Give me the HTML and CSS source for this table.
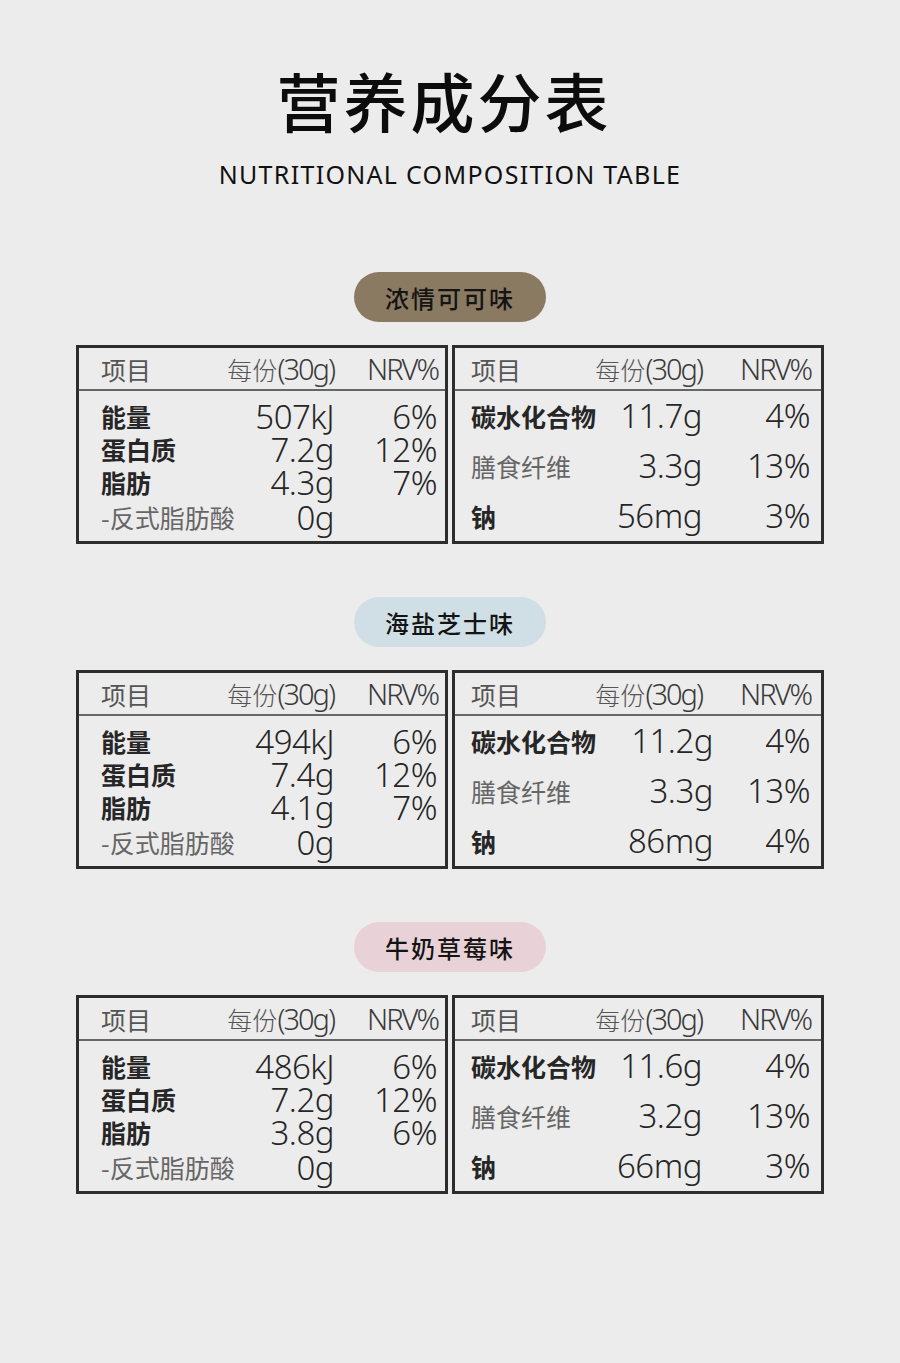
FILE: index.html
```html
<!DOCTYPE html>
<html lang="zh-CN">
<head>
<meta charset="utf-8">
<title>营养成分表</title>
<link rel="stylesheet" href="styles.css">
</head>
<body>
<main class="page">
  <header class="hero">
    <h1 class="title">营养成分表</h1>
    <p class="subtitle">NUTRITIONAL COMPOSITION TABLE</p>
  </header>

  <section class="flavor">
    <div class="pill pill-cocoa">浓情可可味</div>
    <div class="tables">
      <div class="box box-left">
        <div class="head"><span>项目</span><span class="hnum"><span class="hcjk">每份</span>(30g)</span><span class="hnum nrvh">NRV%</span></div>
        <div class="body">
          <div class="row"><span class="lab strong">能量</span><span class="num">507kJ</span><span class="num">6%</span></div>
          <div class="row"><span class="lab strong">蛋白质</span><span class="num">7.2g</span><span class="num">12%</span></div>
          <div class="row"><span class="lab strong">脂肪</span><span class="num">4.3g</span><span class="num">7%</span></div>
          <div class="row row-last"><span class="lab soft">-反式脂肪酸</span><span class="num">0g</span><span class="num"></span></div>
        </div>
      </div>
      <div class="box box-right">
        <div class="head"><span>项目</span><span class="hnum"><span class="hcjk">每份</span>(30g)</span><span class="hnum nrvh">NRV%</span></div>
        <div class="body">
          <div class="row"><span class="lab strong">碳水化合物</span><span class="num">11.7g</span><span class="num">4%</span></div>
          <div class="row"><span class="lab soft">膳食纤维</span><span class="num">3.3g</span><span class="num">13%</span></div>
          <div class="row"><span class="lab strong">钠</span><span class="num">56mg</span><span class="num">3%</span></div>
        </div>
      </div>
    </div>
  </section>

  <section class="flavor">
    <div class="pill pill-cheese">海盐芝士味</div>
    <div class="tables">
      <div class="box box-left">
        <div class="head"><span>项目</span><span class="hnum"><span class="hcjk">每份</span>(30g)</span><span class="hnum nrvh">NRV%</span></div>
        <div class="body">
          <div class="row"><span class="lab strong">能量</span><span class="num">494kJ</span><span class="num">6%</span></div>
          <div class="row"><span class="lab strong">蛋白质</span><span class="num">7.4g</span><span class="num">12%</span></div>
          <div class="row"><span class="lab strong">脂肪</span><span class="num">4.1g</span><span class="num">7%</span></div>
          <div class="row row-last"><span class="lab soft">-反式脂肪酸</span><span class="num">0g</span><span class="num"></span></div>
        </div>
      </div>
      <div class="box box-right box-shift">
        <div class="head"><span>项目</span><span class="hnum"><span class="hcjk">每份</span>(30g)</span><span class="hnum nrvh">NRV%</span></div>
        <div class="body">
          <div class="row"><span class="lab strong">碳水化合物</span><span class="num">11.2g</span><span class="num">4%</span></div>
          <div class="row"><span class="lab soft">膳食纤维</span><span class="num">3.3g</span><span class="num">13%</span></div>
          <div class="row"><span class="lab strong">钠</span><span class="num">86mg</span><span class="num">4%</span></div>
        </div>
      </div>
    </div>
  </section>

  <section class="flavor">
    <div class="pill pill-berry">牛奶草莓味</div>
    <div class="tables">
      <div class="box box-left">
        <div class="head"><span>项目</span><span class="hnum"><span class="hcjk">每份</span>(30g)</span><span class="hnum nrvh">NRV%</span></div>
        <div class="body">
          <div class="row"><span class="lab strong">能量</span><span class="num">486kJ</span><span class="num">6%</span></div>
          <div class="row"><span class="lab strong">蛋白质</span><span class="num">7.2g</span><span class="num">12%</span></div>
          <div class="row"><span class="lab strong">脂肪</span><span class="num">3.8g</span><span class="num">6%</span></div>
          <div class="row row-last"><span class="lab soft">-反式脂肪酸</span><span class="num">0g</span><span class="num"></span></div>
        </div>
      </div>
      <div class="box box-right">
        <div class="head"><span>项目</span><span class="hnum"><span class="hcjk">每份</span>(30g)</span><span class="hnum nrvh">NRV%</span></div>
        <div class="body">
          <div class="row"><span class="lab strong">碳水化合物</span><span class="num">11.6g</span><span class="num">4%</span></div>
          <div class="row"><span class="lab soft">膳食纤维</span><span class="num">3.2g</span><span class="num">13%</span></div>
          <div class="row"><span class="lab strong">钠</span><span class="num">66mg</span><span class="num">3%</span></div>
        </div>
      </div>
    </div>
  </section>
</main>
</body>
</html>
```

FILE: styles.css
```css
* { box-sizing: border-box; }
html, body { margin: 0; padding: 0; }
body {
  background: #ececec;
  font-family: "Noto Sans", "Noto Sans CJK SC", sans-serif;
  color: #222;
}
.page {
  width: 900px;
  min-height: 1363px;
  padding-top: 67px;
}
.hero { text-align: center; }
.title {
  margin: 0;
  padding-right: 12px;
  font-family: "Noto Sans CJK SC", sans-serif;
  font-size: 64px;
  line-height: 64px;
  font-weight: 500;
  letter-spacing: 3px;
  color: #0c0c0c;
}
.subtitle {
  margin: 28px 0 0;
  font-family: "Noto Sans", sans-serif;
  font-size: 25px;
  line-height: 30px;
  letter-spacing: 1.3px;
  color: #111;
}
.flavor {
  display: flex;
  flex-direction: column;
  align-items: center;
  margin-bottom: 53px;
}
.hero + .flavor { margin-top: 83px; }
.pill {
  width: 192px;
  height: 50px;
  border-radius: 25px;
  display: flex;
  align-items: center;
  justify-content: center;
  font-family: "Noto Sans CJK SC", sans-serif;
  font-size: 24px;
  font-weight: 500;
  letter-spacing: 2px;
  color: #141414;
}
.pill-cocoa { background: #8b7a62; }
.pill-cheese { background: #cfdfe5; }
.pill-berry { background: #e9d2d7; }
.tables {
  margin-top: 23px;
  display: flex;
  gap: 4px;
}
.box {
  width: 372px;
  height: 199px;
  border: 3px solid #2d2d2d;
  display: flex;
  flex-direction: column;
}
.head, .row {
  display: grid;
  align-items: center;
}
.head {
  height: 43px;
  border-bottom: 2px solid #666;
  font-family: "Noto Sans CJK SC", sans-serif;
  font-size: 25px;
  color: #555;
}
.hnum {
  text-align: right;
  font-family: "Noto Sans", sans-serif;
  font-weight: 300;
  font-size: 29px;
  letter-spacing: -2px;
  color: #3a3a3a;
  white-space: nowrap;
}
.hcjk {
  font-family: "Noto Sans CJK SC", sans-serif;
  font-size: 25px;
  letter-spacing: 0;
  color: #555;
}
.nrvh { margin-right: -1px; }
.num {
  text-align: right;
  font-family: "Noto Sans", sans-serif;
  font-weight: 300;
  font-size: 33px;
  letter-spacing: -0.5px;
  color: #262626;
  white-space: nowrap;
}
.lab {
  font-family: "Noto Sans CJK SC", sans-serif;
  font-size: 25px;
  white-space: nowrap;
}
.strong { font-weight: 700; color: #262626; }
.soft { font-weight: 400; color: #666; }

.box-left .head, .box-left .row {
  grid-template-columns: 1fr auto 103px;
  padding: 0 8px 0 22px;
}
.box-left .body { padding-top: 9px; }
.box-left .row { height: 33px; line-height: 33px; }
.box-left .row-last { margin-top: 2px; }

.box-right .head, .box-right .row {
  grid-template-columns: 1fr auto 108px;
  padding: 0 11px 0 16px;
}
.box-right .row { height: 50px; line-height: 50px; }
.box-shift .head, .box-shift .row { grid-template-columns: 1fr auto 97px; }
.box-shift .head .hnum:nth-child(2) { margin-right: 11px; }
```
